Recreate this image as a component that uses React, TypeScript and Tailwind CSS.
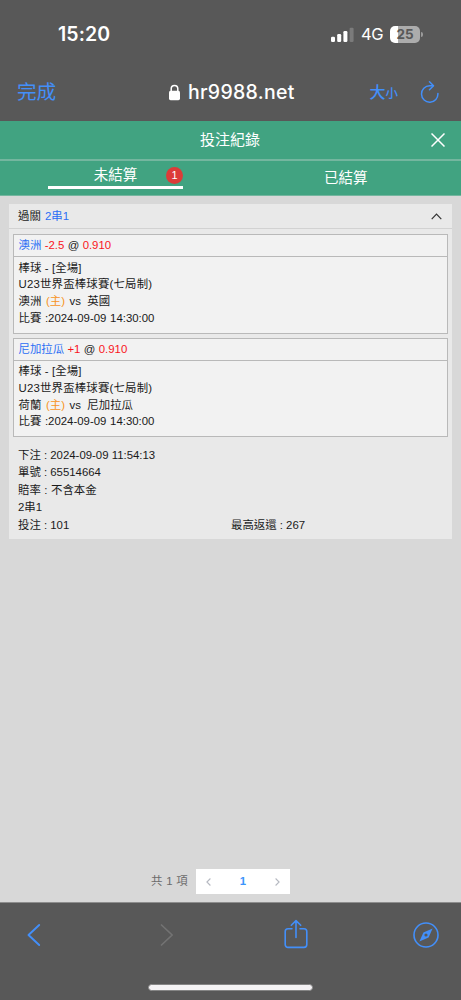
import React from "react";

const cjk = "font-['Liberation_Sans','Noto_Sans_CJK_TC',sans-serif]";
const ui = "font-['Inter','Noto_Sans_CJK_TC',sans-serif]";

type Bet = { pick: string; line: string; odds: string; home: string; away: string };

const bets: Bet[] = [
  { pick: "澳洲", line: "-2.5", odds: "0.910", home: "澳洲", away: "英國" },
  { pick: "尼加拉瓜", line: "+1", odds: "0.910", home: "荷蘭", away: "尼加拉瓜" },
];

function StatusBar() {
  return (
    <div className="flex h-[69px] items-center pl-[58px] pr-[38px]">
      <span className="text-[19.5px] font-semibold leading-none tracking-[0.1px] text-white">15:20</span>
      <div className="ml-auto flex items-center">
        <svg width="24" height="16" viewBox="0 0 24 16" className="mr-[6px]">
          <rect x="0" y="9.7" width="4" height="5.3" rx="1.2" fill="#fff" />
          <rect x="6.2" y="7" width="4" height="8" rx="1.2" fill="#fff" />
          <rect x="12.4" y="4" width="4" height="11" rx="1.2" fill="#fff" />
          <rect x="18.6" y="0.7" width="4" height="14.3" rx="1.2" fill="#7b7b7b" />
        </svg>
        <span className="w-[23px] whitespace-nowrap text-[16.5px] leading-none tracking-[-0.3px] text-white">4G</span>
        <div className="ml-[6px] flex items-center">
          <div className="flex h-[17px] w-[30px] items-center justify-center rounded-[5px] bg-[linear-gradient(90deg,#fff_25%,#acacac_25%)] text-[13.5px] font-bold leading-none text-[#585858]">
            25
          </div>
          <div className="ml-[1px] h-[5px] w-[2px] rounded-r-full bg-[#9b9b9b]" />
        </div>
      </div>
    </div>
  );
}

function AddressBar() {
  return (
    <div className="flex h-[52px] items-center pb-[5px] pl-[17px] pr-[22px] text-[#438ff9]">
      <span className="w-[151px] text-[19.6px] leading-none">完成</span>
      <svg width="13" height="17" viewBox="0 0 13 17" className="mr-[7px]">
        <rect x="1" y="6.8" width="11" height="9.4" rx="1.6" fill="#fff" />
        <path d="M3.2 8V4.7a3.3 3.3 0 0 1 6.6 0V8" fill="none" stroke="#fff" strokeWidth="1.5" />
      </svg>
      <span className="text-[19.5px] font-medium leading-none tracking-[0.3px] text-white">hr9988.net</span>
      <span className="ml-auto flex items-baseline font-medium leading-none">
        <span className="text-[16px]">大</span>
        <span className="text-[12.5px]">小</span>
      </span>
      <svg width="19" height="22" viewBox="0 0 19 22" className="-mt-[2px] ml-[22px]" fill="none" stroke="currentColor" strokeWidth="1.5" strokeLinecap="round" strokeLinejoin="round">
        <path d="M17.9 12.4A8.2 8.2 0 1 1 9.7 4.8h3.4" />
        <path d="M9.5 .8l4 4-4 4" />
      </svg>
    </div>
  );
}

function BetPanel({ bet }: { bet: Bet }) {
  return (
    <div className="h-[99.5px] border border-[#b9b9b9] bg-[#f2f2f2] text-[11.4px]">
      <div className="h-[22px] border-b border-[#b9b9b9] pl-[4.5px] leading-[21.5px] [word-spacing:0.2px]">
        <span className="text-[#2a6ef5]">{bet.pick}</span> <span className="text-[#f9151c]">{bet.line}</span> @{" "}
        <span className="text-[#f9151c]">{bet.odds}</span>
      </div>
      <div className="pl-[4.5px] pt-[2.5px] leading-[16.8px]">
        <p className="tracking-[0.12px]">棒球 - [全場]</p>
        <p className="tracking-[0.2px]">U23世界盃棒球賽(七局制)</p>
        <p className="whitespace-pre">
          {bet.home} <span className="ml-[1.5px] mr-[1.5px] text-[#f7941d]">(主)</span>
          {" vs  "}
          {bet.away}
        </p>
        <p className="[word-spacing:0.5px]">比賽 :2024-09-09 14:30:00</p>
      </div>
    </div>
  );
}

function Ticket() {
  return (
    <section className="h-[335px] bg-[#e9e9e9] text-[11.4px] text-[#1a1a1a]">
      <div className="flex h-[25px] items-center justify-between border-b border-[#d2d2d2] pl-[9px] pr-[10px] pt-[1px]">
        <span className="[word-spacing:1px]">
          過關 <span className="text-[#2a6ef5]">2串1</span>
        </span>
        <svg width="11" height="7" viewBox="0 0 11 7" fill="none" stroke="#333" strokeWidth="1.2">
          <path d="M.7 6.2L5.5 1.2l4.8 5" />
        </svg>
      </div>
      <div className="flex flex-col gap-[4px] px-[4px] pt-[5px]">
        {bets.map((bet) => (
          <BetPanel key={bet.pick} bet={bet} />
        ))}
      </div>
      <div className="pl-[9px] pt-[9.5px] leading-[17.6px]">
        <p>下注 : 2024-09-09 11:54:13</p>
        <p>單號 : 65514664</p>
        <p className="[word-spacing:0.4px]">賠率 : 不含本金</p>
        <p>2串1</p>
        <div className="grid grid-cols-[213px_1fr]">
          <p>投注 : 101</p>
          <p>最高返還 : 267</p>
        </div>
      </div>
    </section>
  );
}

function Pagination() {
  return (
    <div className="mt-auto flex items-center pb-[8px] pl-[151px] text-[11.4px] text-[#6b6b6b]">
      <span className="w-[45px] whitespace-nowrap [word-spacing:0.6px]">共 1 項</span>
      <div className="flex h-[25px] w-[94px] items-center justify-between bg-white px-[10px]">
        <svg width="5" height="8" viewBox="0 0 5 8" fill="none" stroke="#b5b8c0" strokeWidth="1.1">
          <path d="M4.4.5L.9 4l3.5 3.5" />
        </svg>
        <span className="font-bold text-[#3c94fb]">1</span>
        <svg width="5" height="8" viewBox="0 0 5 8" fill="none" stroke="#b5b8c0" strokeWidth="1.1">
          <path d="M.6.5L4.1 4 .6 7.5" />
        </svg>
      </div>
    </div>
  );
}

function Toolbar() {
  return (
    <footer className="flex h-[98px] flex-col items-center border-t border-[#8d8d8d] bg-[#585858] text-[#438ff9]">
      <div className="flex h-[63px] w-full items-center pl-[27px]">
        <svg width="14" height="24" viewBox="0 0 14 24" fill="none" stroke="currentColor" strokeWidth="1.9" strokeLinecap="round" strokeLinejoin="round">
          <path d="M12.2 2L1.5 12l10.7 10" />
        </svg>
        <svg width="14" height="24" viewBox="0 0 14 24" fill="none" stroke="#737373" strokeWidth="1.7" strokeLinecap="round" strokeLinejoin="round" className="ml-[119px]">
          <path d="M1.5 2l10.7 10L1.5 22" />
        </svg>
        <svg width="24" height="30" viewBox="0 0 24 30" fill="none" stroke="currentColor" strokeWidth="1.6" strokeLinecap="round" strokeLinejoin="round" className="-mt-[2px] ml-[110px]">
          <path d="M8 9.8H4a2.8 2.8 0 0 0-2.8 2.8v13A2.8 2.8 0 0 0 4 28.4h16a2.8 2.8 0 0 0 2.8-2.8v-13A2.8 2.8 0 0 0 20 9.8h-4" />
          <path d="M12 18.5V1.8M7.3 6.3L12 1.6l4.7 4.7" />
        </svg>
        <svg width="26" height="26" viewBox="0 0 26 26" className="ml-[105px]">
          <circle cx="13" cy="13" r="12" fill="none" stroke="currentColor" strokeWidth="1.6" />
          <path fill="currentColor" fillRule="evenodd" d="M19.6 6.4L15.6 15.4 6.4 19.6l4-9zM13 11.4a1.6 1.6 0 1 0 0 3.2 1.6 1.6 0 0 0 0-3.2z" />
        </svg>
      </div>
      <div className="mt-[18px] h-[7px] w-[165px] rounded-full border border-[#858585] bg-[#f4f2f4]" />
    </footer>
  );
}

export default function App() {
  return (
    <div className={`flex h-[1000px] w-[461px] flex-col overflow-hidden bg-[#d8d8d8] ${cjk}`}>
      <div className={`bg-[#585858] ${ui}`}>
        <StatusBar />
        <AddressBar />
      </div>
      <header className="bg-[#41a381] text-white">
        <div className="flex h-[40px] items-center border-b-2 border-[#74b69f] pr-[16px]">
          <h1 className="flex-1 pl-[29px] pt-[1px] text-center text-[15px]">投注紀錄</h1>
          <svg width="14" height="14" viewBox="0 0 14 14" stroke="#fff" strokeWidth="1.5">
            <path d="M.5.5l13 13M13.5.5l-13 13" />
          </svg>
        </div>
        <nav className="grid h-[35px] grid-cols-2 border-b border-[#74b69f] text-[14.5px]">
          <div className="relative mx-[48px] h-[28px] w-[135px] border-b-[3px] border-white text-center leading-[28px]">
            未結算
            <span className="absolute right-0 top-[6px] flex size-[17px] items-center justify-center rounded-full bg-[#dc3b38] text-[11px] leading-none">
              1
            </span>
          </div>
          <div className="text-center leading-[34px]">已結算</div>
        </nav>
      </header>
      <main className="flex flex-1 flex-col pt-[8px]">
        <div className="px-[9px]">
          <Ticket />
        </div>
        <Pagination />
      </main>
      <Toolbar />
    </div>
  );
}
